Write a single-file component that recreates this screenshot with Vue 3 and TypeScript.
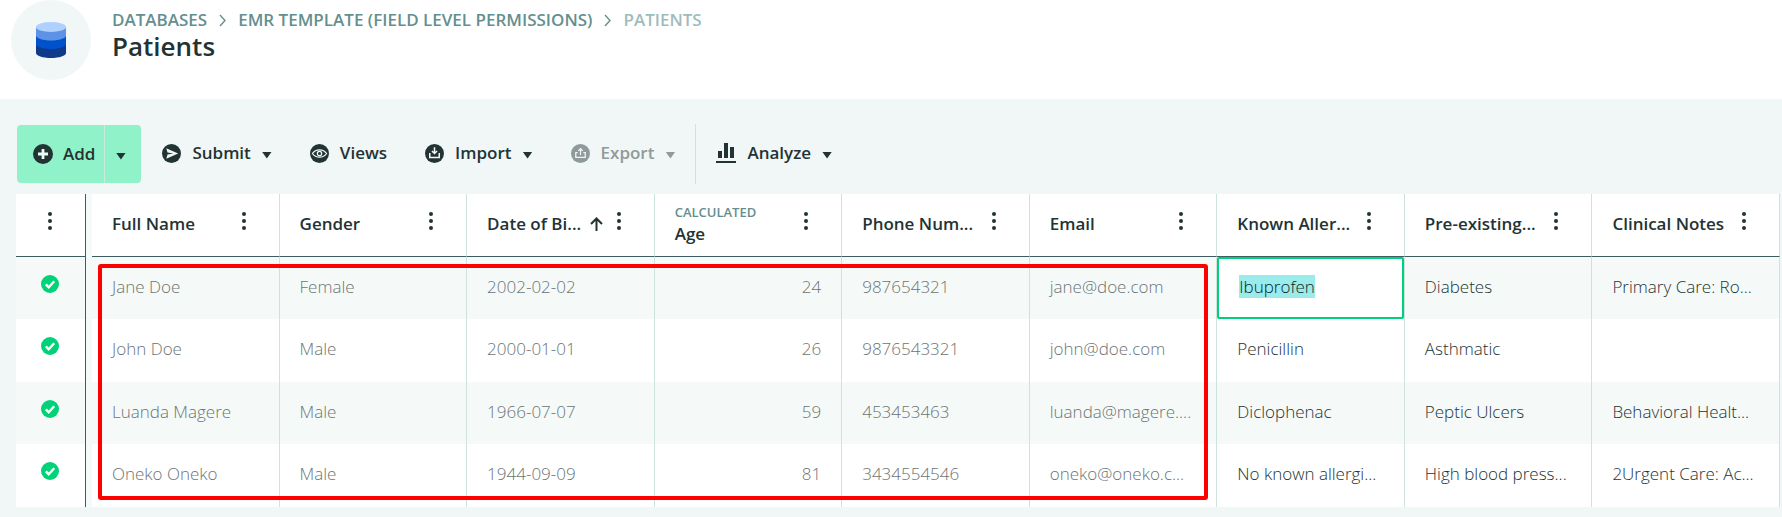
<script setup lang="ts">
import { onMounted, ref } from 'vue'

interface Column {
  label: string
  tag?: string
  sorted?: boolean
  numeric?: boolean
  locked?: boolean
}

const columns: Column[] = [
  { label: 'Full Name', locked: true },
  { label: 'Gender', locked: true },
  { label: 'Date of Bi...', sorted: true, locked: true },
  { label: 'Age', tag: 'CALCULATED', numeric: true, locked: true },
  { label: 'Phone Num...', locked: true },
  { label: 'Email', locked: true },
  { label: 'Known Aller...' },
  { label: 'Pre-existing...' },
  { label: 'Clinical Notes' },
]

const rows: string[][] = [
  ['Jane Doe', 'Female', '2002-02-02', '24', '987654321', 'jane@doe.com', 'Ibuprofen', 'Diabetes', 'Primary Care: Ro...'],
  ['John Doe', 'Male', '2000-01-01', '26', '9876543321', 'john@doe.com', 'Penicillin', 'Asthmatic', ''],
  ['Luanda Magere', 'Male', '1966-07-07', '59', '453453463', 'luanda@magere....', 'Diclophenac', 'Peptic Ulcers', 'Behavioral Healt...'],
  ['Oneko Oneko', 'Male', '1944-09-09', '81', '3434554546', 'oneko@oneko.c...', 'No known allergi...', 'High blood press...', '2Urgent Care: Ac...'],
]

const editing = { row: 0, column: 6 }
const editor = ref<HTMLInputElement[]>([])

function isEditing(row: number, column: number): boolean {
  return row === editing.row && column === editing.column
}

onMounted(() => {
  editor.value[0]?.focus()
  editor.value[0]?.select()
})
</script>

<template>
  <div class="page">
    <header class="header">
      <div class="avatar">
        <svg width="30" height="36" viewBox="0 0 30 36" aria-hidden="true">
          <path d="M0 22h30v9c0 2.800-6.700 5-15 5s-15-2.200-15-5z" fill="#0f3a8c" />
          <path d="M0 13h30v9c0 2.800-6.700 5-15 5s-15-2.200-15-5z" fill="#0052cc" />
          <path d="M0 5h30v8.500c0 2.800-6.700 5-15 5s-15-2.200-15-5z" fill="#5c93e6" />
          <ellipse cx="15" cy="5" rx="15" ry="5" fill="#b0d0ff" />
        </svg>
      </div>
      <div class="heading">
        <nav class="crumbs" aria-label="Breadcrumb">
          <a href="#databases">DATABASES</a>
          <svg width="7" height="13" viewBox="0 0 7 13" aria-hidden="true"><path d="M1 1l5 5.500-5 5.500" /></svg>
          <a href="#template">EMR TEMPLATE (FIELD LEVEL PERMISSIONS)</a>
          <svg width="7" height="13" viewBox="0 0 7 13" aria-hidden="true"><path d="M1 1l5 5.500-5 5.500" /></svg>
          <span class="current">PATIENTS</span>
        </nav>
        <h1>Patients</h1>
      </div>
    </header>

    <main>
      <div class="toolbar" role="toolbar" aria-label="Record actions">
        <div class="add">
          <button type="button" class="add-main">
            <svg width="20" height="20" viewBox="0 0 20 20" aria-hidden="true">
              <circle cx="10" cy="10" r="10" fill="currentColor" />
              <path d="M10 5v10M5 10h10" stroke="#e9fbf4" stroke-width="2.800" />
            </svg>
            Add
          </button>
          <button type="button" class="add-more" aria-label="More add options"><i class="caret"></i></button>
        </div>
        <button type="button" class="tool">
          <svg width="19" height="19" viewBox="0 0 20 20" aria-hidden="true">
            <circle cx="10" cy="10" r="10" fill="currentColor" />
            <path d="M4.500 4.500l12.500 5.500-12.500 5.500 1.300-4.500 6-1-6-1z" fill="#f1f7f7" />
          </svg>
          Submit <i class="caret"></i>
        </button>
        <button type="button" class="tool">
          <svg width="19" height="19" viewBox="0 0 20 20" aria-hidden="true">
            <circle cx="10" cy="10" r="10" fill="currentColor" />
            <path d="M2.500 10c3.700-5.200 11.300-5.200 15 0-3.700 5.200-11.300 5.200-15 0z" fill="none" stroke="#f1f7f7" stroke-width="1.300" />
            <circle cx="10" cy="10" r="2.300" fill="none" stroke="#f1f7f7" stroke-width="1.300" />
          </svg>
          Views
        </button>
        <button type="button" class="tool">
          <svg width="19" height="19" viewBox="0 0 20 20" aria-hidden="true">
            <circle cx="10" cy="10" r="10" fill="currentColor" />
            <path d="M5 9.500v4.700h10V9.500M10 3.500v6M7.300 7.300l2.700 2.700 2.700-2.700" fill="none" stroke="#f1f7f7" stroke-width="1.600" />
          </svg>
          Import <i class="caret"></i>
        </button>
        <button type="button" class="tool" disabled>
          <svg width="19" height="19" viewBox="0 0 20 20" aria-hidden="true">
            <circle cx="10" cy="10" r="10" fill="currentColor" />
            <path d="M7 9H5v5.200h10V9h-2M10 11.500V5.500M7.600 7.300L10 4.900l2.400 2.400" fill="none" stroke="#f1f7f7" stroke-width="1.300" />
          </svg>
          Export <i class="caret"></i>
        </button>
        <span class="divider"></span>
        <button type="button" class="tool">
          <svg width="20" height="20" viewBox="0 0 20 20" aria-hidden="true">
            <path d="M0 18h20v2H0zM2 8h4v7H2zM8 0h4v15H8zM14 4h4v11h-4z" fill="currentColor" />
          </svg>
          Analyze <i class="caret"></i>
        </button>
      </div>

      <div class="grid">
        <table>
          <colgroup>
            <col class="col-state" />
            <col class="col-gap" />
            <col v-for="column in columns" :key="column.label" />
          </colgroup>
          <thead>
            <tr>
              <th class="state">
                <button type="button" class="dots" aria-label="Table menu">
                  <svg width="4" height="18" viewBox="0 0 4 18"><circle cx="2" cy="2" r="2" /><circle cx="2" cy="9" r="2" /><circle cx="2" cy="16" r="2" /></svg>
                </button>
              </th>
              <td class="gap"></td>
              <th v-for="column in columns" :key="column.label" scope="col">
                <div class="head">
                  <span class="label">
                    <small v-if="column.tag">{{ column.tag }}</small>
                    {{ column.label }}
                  </span>
                  <svg v-if="column.sorted" class="sort" width="13" height="14" viewBox="0 0 13 14" aria-hidden="true">
                    <path d="M6.500 14V1.500M1 7l5.500-5.500L12 7" />
                  </svg>
                  <button type="button" class="dots" :aria-label="`${column.label} menu`">
                    <svg width="4" height="18" viewBox="0 0 4 18"><circle cx="2" cy="2" r="2" /><circle cx="2" cy="9" r="2" /><circle cx="2" cy="16" r="2" /></svg>
                  </button>
                </div>
              </th>
            </tr>
          </thead>
          <tbody>
            <tr v-for="(row, r) in rows" :key="r">
              <td class="state">
                <svg class="check" width="18" height="18" viewBox="0 0 18 18" role="img" aria-label="Saved">
                  <circle cx="9" cy="9" r="9" fill="#00d277" />
                  <path d="M4.800 9.300l2.900 2.900 5.500-6" fill="none" stroke="#fff" stroke-width="2.400" />
                </svg>
              </td>
              <td class="gap"></td>
              <td
                v-for="(cell, c) in row"
                :key="c"
                :class="{ locked: columns[c].locked, numeric: columns[c].numeric, editing: isEditing(r, c) }"
              >
                <input v-if="isEditing(r, c)" ref="editor" type="text" :value="cell" :aria-label="columns[c].label" />
                <template v-else>{{ cell }}</template>
              </td>
            </tr>
          </tbody>
        </table>
        <div class="marker"></div>
      </div>
    </main>
  </div>
</template>

<style>
body {
  margin: 0;
  background: #f1f7f7;
}
</style>

<style scoped>
.page {
  color: #233333;
  font-family: "Open Sans", "Noto Sans", sans-serif;
  font-size: 17px;
  line-height: 24px;
}

.header {
  display: flex;
  gap: 21px;
  padding: 0 11px 19px;
  background: #fff;
}

.avatar {
  display: flex;
  flex: none;
  align-items: center;
  justify-content: center;
  width: 80px;
  height: 80px;
  border-radius: 50%;
  background: #f1f7f7;
}

.heading {
  padding-top: 8px;
}

.crumbs {
  display: flex;
  align-items: center;
  gap: 12px;
  color: #648f8f;
  font-weight: 600;
}

.crumbs a {
  color: inherit;
  text-decoration: none;
}

.crumbs path {
  fill: none;
  stroke: currentColor;
  stroke-width: 1.400;
}

.current {
  color: #9fbcbc;
}

h1 {
  margin: 0;
  font-size: 26px;
  font-weight: 600;
  line-height: 28px;
}

.toolbar {
  display: flex;
  align-items: center;
  gap: 38px;
  padding: 26px 17px 11px;
}

button {
  display: flex;
  align-items: center;
  padding: 0;
  border: 0;
  background: none;
  color: inherit;
  font: inherit;
  font-weight: 600;
}

.add {
  display: flex;
  height: 58px;
  margin-right: -17px;
  overflow: hidden;
  border-radius: 4px;
  background: #90f2c9;
}

.add-main {
  gap: 10px;
  padding: 0 9px 0 16px;
}

.add-more {
  justify-content: center;
  width: 37px;
  padding-right: 5px;
  border-left: 1px solid #cfe8de;
}

.caret {
  width: 10px;
  height: 7px;
  margin-top: 4px;
  background: currentColor;
  clip-path: polygon(0 0, 100% 0, 50% 100%);
}

.tool {
  gap: 11px;
  padding-bottom: 2px;
}

.tool:disabled {
  color: #8f9a9a;
}

.divider {
  width: 1px;
  height: 60px;
  margin: -1px -18px;
  background: #cfe3de;
}

.grid {
  position: relative;
  margin: 0 2px 10px 16px;
}

table {
  width: 100%;
  table-layout: fixed;
  border-spacing: 0;
  background: #fff;
}

.col-state {
  width: 70px;
}

.col-gap {
  width: 6px;
}

th,
td {
  box-sizing: border-box;
  height: 62px;
  padding: 0 0 2px 20px;
  border-right: 1px solid #cfe3de;
  overflow: hidden;
  font-weight: 300;
  text-align: left;
  white-space: nowrap;
}

thead th {
  height: 63px;
  padding-bottom: 2px;
  border-bottom: 1px solid #3e5c60;
  font-weight: 600;
}

tbody tr:nth-child(odd) {
  background: #f5faf9;
}

tbody tr:nth-child(even) td {
  height: 63px;
  padding-bottom: 4px;
}

th.state,
tbody tr td.state {
  padding: 0 1px 9px 0;
  border-right-color: #3e5c60;
  text-align: center;
}

.state .dots,
.check {
  display: block;
  margin: 0 auto;
}

td.gap {
  padding: 0;
  border: 0;
  background: #f4f9f9;
}

.head {
  display: flex;
  align-items: center;
}

.label {
  flex: 1;
}

small {
  display: block;
  color: #648f8f;
  font-size: 13px;
  font-weight: 600;
  line-height: 20px;
}

.sort {
  margin-right: 14px;
  fill: none;
  stroke: currentColor;
  stroke-width: 2;
}

.dots {
  margin-right: 33px;
  padding-bottom: 7px;
}

.dots svg {
  display: block;
  fill: currentColor;
}

.state .dots {
  padding: 0;
}

td.locked {
  color: #6c7474;
}

td.numeric {
  padding-right: 20px;
  text-align: right;
}

td.editing {
  padding: 0;
}

input {
  display: block;
  box-sizing: border-box;
  width: 100%;
  height: 62px;
  padding: 0 20px 3px;
  border: 2px solid #00d07c;
  border-radius: 2px;
  outline: none;
  background: #fff;
  color: inherit;
  font: inherit;
}

input::selection {
  background: #9aebeb;
  color: #0c1f1f;
}

.marker {
  position: absolute;
  top: 70px;
  bottom: 7px;
  left: 82px;
  box-sizing: border-box;
  width: calc((100% - 76px) * 2 / 3 - 15px);
  border: 4px solid #f00;
  border-radius: 3px;
  pointer-events: none;
}
</style>
